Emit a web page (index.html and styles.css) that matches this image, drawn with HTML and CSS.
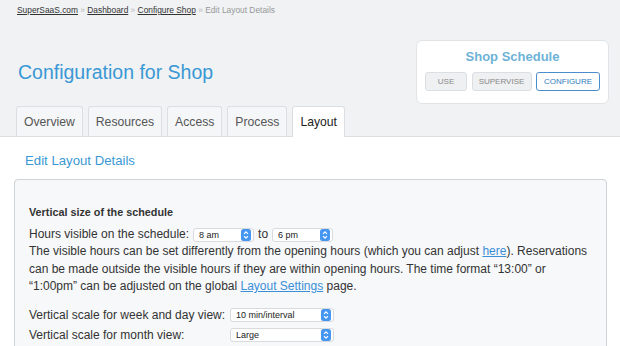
FILE: index.html
```html
<!DOCTYPE html>
<html lang="en">
<head>
    <meta charset="UTF-8">
    <title>Edit Layout Details</title>
    <link rel="stylesheet" href="styles.css">
</head>
<body>
    <div class="crumbs">
        <a href="#">SuperSaaS.com</a> &raquo; <a href="#">Dashboard</a> &raquo; <a href="#">Configure Shop</a> &raquo; <span class="here">Edit Layout Details</span>
    </div>
    <div class="header">
        <h1 class="title">Configuration for Shop</h1>
        <div class="schedBox">
            <div class="schedName">Shop Schedule</div>
            <div class="schedBtns">
                <button class="sbtn w-use">USE</button>
                <button class="sbtn w-sup">SUPERVISE</button>
                <button class="sbtn w-conf active">CONFIGURE</button>
            </div>
        </div>
    </div>
    <ul class="tabs">
        <li class="tab">Overview</li>
        <li class="tab">Resources</li>
        <li class="tab">Access</li>
        <li class="tab">Process</li>
        <li class="tab active">Layout</li>
    </ul>
    <div class="content">
        <h2 class="subtitle">Edit Layout Details</h2>
        <div class="panel">
            <h3 class="section">Vertical size of the schedule</h3>
            <div class="hours">
                Hours visible on the schedule:
                <span class="sel w-hour"><select><option>8 am</option></select><svg class="spin" viewBox="0 0 10 12"><rect width="10" height="12" rx="2.5" fill="#4596f0"/><path d="M3 4.8 L5 2.8 L7 4.8 M3 7.2 L5 9.2 L7 7.2" fill="none" stroke="#fff" stroke-width="1.1"/></svg></span>
                to
                <span class="sel w-hour"><select><option>6 pm</option></select><svg class="spin" viewBox="0 0 10 12"><rect width="10" height="12" rx="2.5" fill="#4596f0"/><path d="M3 4.8 L5 2.8 L7 4.8 M3 7.2 L5 9.2 L7 7.2" fill="none" stroke="#fff" stroke-width="1.1"/></svg></span>
            </div>
            <p class="note">The visible hours can be set differently from the opening hours (which you can adjust <a href="#">here</a>). Reservations can be made outside the visible hours if they are within opening hours. The time format &ldquo;13:00&rdquo; or &ldquo;1:00pm&rdquo; can be adjusted on the global <a href="#">Layout Settings</a> page.</p>
            <div class="scales">
                <span>Vertical scale for week and day view:</span>
                <span class="sel w-scale"><select><option>10 min/interval</option></select><svg class="spin" viewBox="0 0 10 12"><rect width="10" height="12" rx="2.5" fill="#4596f0"/><path d="M3 4.8 L5 2.8 L7 4.8 M3 7.2 L5 9.2 L7 7.2" fill="none" stroke="#fff" stroke-width="1.1"/></svg></span>
                <span>Vertical scale for month view:</span>
                <span class="sel w-scale"><select><option>Large</option></select><svg class="spin" viewBox="0 0 10 12"><rect width="10" height="12" rx="2.5" fill="#4596f0"/><path d="M3 4.8 L5 2.8 L7 4.8 M3 7.2 L5 9.2 L7 7.2" fill="none" stroke="#fff" stroke-width="1.1"/></svg></span>
            </div>
        </div>
    </div>
</body>
</html>
```

FILE: styles.css
```css
body{
    margin: 0;
    background-color: #f0f2f4;
    font-family: "Liberation Sans", Arial, sans-serif;
    color: #333;
    overflow: hidden;
}
a{
    color: #3a8fd8;
}

.crumbs{
    padding: 5px 17px 0;
    font-size: 8.4px;
    line-height: 11px;
    color: #bbb;
}
.crumbs a{
    color: #333;
}
.crumbs .here{
    color: #999;
}

.header{
    display: flex;
    justify-content: space-between;
    align-items: center;
    padding: 24px 11px 0 18px;
}
.title{
    margin: 0;
    font-size: 19.5px;
    font-weight: normal;
    color: #3a98d4;
}
.schedBox{
    width: 175px;
    height: 50px;
    padding: 6px 8px;
    background-color: #fff;
    border: 1px solid #e1e4e7;
    border-radius: 6px;
    text-align: center;
}
.schedName{
    font-size: 13px;
    font-weight: bold;
    color: #6db3d6;
    line-height: 20px;
    margin-bottom: 5px;
}
.schedBtns{
    display: flex;
    justify-content: space-between;
}
.sbtn{
    height: 19px;
    padding: 0;
    font-family: inherit;
    font-size: 8px;
    color: #888;
    background-color: #eef0f2;
    border: 1px solid #dcdfe2;
    border-radius: 3px;
}
.sbtn.active{
    color: #2d7cc0;
    background-color: #fff;
    border-color: #4a8fcb;
}
.w-use{
    width: 42px;
}
.w-sup{
    width: 60px;
}
.w-conf{
    width: 64px;
}

.tabs{
    display: flex;
    gap: 5px;
    list-style: none;
    margin: 2px 0 0;
    padding: 0 0 0 16px;
    border-bottom: 1px solid #dcdfe2;
}
.tab{
    height: 29px;
    line-height: 30px;
    padding: 0 7px;
    margin-bottom: -1px;
    font-size: 12.2px;
    color: #555;
    background-color: #f4f6f8;
    border: 1px solid #dcdfe2;
    border-bottom: none;
    border-radius: 3px 3px 0 0;
}
.tab.active{
    height: 30px;
    color: #222;
    background-color: #fff;
}

.content{
    background-color: #fff;
    padding: 14px 13px 0 14px;
    height: 220px;
}
.subtitle{
    margin: 0 0 0 11px;
    font-size: 13.2px;
    font-weight: normal;
    line-height: 20px;
    color: #3a98d4;
}
.panel{
    margin-top: 8px;
    padding: 25px 14px 0;
    background-color: #f7f8fa;
    border: 1px solid #cfd2d6;
    border-radius: 4px;
    height: 200px;
}
.section{
    margin: 0 0 7px;
    font-size: 10.8px;
    line-height: 14px;
    font-weight: bold;
    color: #333;
}
.hours{
    display: flex;
    align-items: center;
    gap: 4px;
    font-size: 12px;
    line-height: 17px;
}
.note{
    margin: 0 0 12px;
    font-size: 12px;
    line-height: 17.5px;
}

.sel{
    display: inline-flex;
    align-items: center;
    justify-content: space-between;
    height: 14px;
    padding: 0 2px 0 0;
    background-color: #fff;
    border: 1px solid #d8dadd;
    border-radius: 3px;
    box-sizing: border-box;
}
.sel select{
    -webkit-appearance: none;
    appearance: none;
    border: none;
    background: transparent;
    padding: 0 0 0 5px;
    font-family: inherit;
    font-size: 9px;
    color: #222;
    outline: none;
}
.spin{
    width: 10px;
    height: 12px;
}
.w-hour{
    width: 61px;
}
.w-scale{
    width: 104px;
}

.scales{
    display: grid;
    grid-template-columns: 201px auto;
    justify-content: start;
    align-items: center;
    row-gap: 5px;
    font-size: 12px;
    line-height: 15px;
}
```
